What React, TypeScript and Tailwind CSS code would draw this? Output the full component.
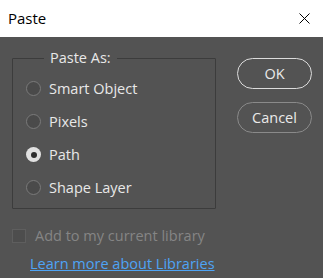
const font = { fontFamily: '"Open Sans", "Noto Sans", Arial, sans-serif' }

function Radio({ label, checked }: { label: string; checked?: boolean }) {
  return (
    <div className="flex h-[33px] items-center">
      {checked ? (
        <span className="flex h-[15px] w-[15px] items-center justify-center rounded-full bg-[#e1e1e1]">
          <span className="h-[6px] w-[6px] rounded-full bg-[#2e2e2e]" />
        </span>
      ) : (
        <span className="h-[15px] w-[15px] rounded-full border border-[#7a7a7a] bg-[#4a4a4a]" />
      )}
      <span className="ml-[8px] text-[14.5px] text-[#e8e8e8]">{label}</span>
    </div>
  )
}

export default function App() {
  return (
    <div className="h-[278px] w-[323px] overflow-hidden bg-[#535353]" style={font}>
      <div className="flex h-[37px] items-center justify-between bg-white pl-[8px] pr-[13px]">
        <span className="text-[15px] text-black">Paste</span>
        <svg width="11" height="11" viewBox="0 0 11 11">
          <path d="M0.5 0.5 L10.5 10.5 M10.5 0.5 L0.5 10.5" stroke="#000" strokeWidth="1" />
        </svg>
      </div>
      <div className="flex">
        <div className="ml-[12px] flex flex-col">
          <fieldset className="mt-[12px] h-[160px] w-[204px] rounded-[1px] border border-[#3c3c3c] pl-[13px] pt-[5px]">
            <legend className="ml-[18px] px-[6px] text-[14.5px] leading-[18px] text-[#e8e8e8]">Paste As:</legend>
            <Radio label="Smart Object" />
            <Radio label="Pixels" />
            <Radio label="Path" checked />
            <Radio label="Shape Layer" />
          </fieldset>
          <div className="mt-[16px] flex items-center">
            <span className="h-[14px] w-[14px] border border-[#5e5e5e] bg-[#4d4d4d]" />
            <span className="ml-[9px] text-[14.5px] text-[#858585]">Add to my current library</span>
          </div>
          <a className="ml-[18px] mt-[6px] text-[14.5px] text-[#4ea4f6] underline">Learn more about Libraries</a>
        </div>
        <div className="ml-[21px] mt-[21px] flex flex-col gap-[13px]">
          <button className="h-[31px] w-[75px] rounded-full border border-[#dcdcdc] text-[14.5px] text-[#eaeaea]">OK</button>
          <button className="h-[31px] w-[75px] rounded-full border border-[#8a8a8a] text-[14.5px] text-[#eaeaea]">Cancel</button>
        </div>
      </div>
    </div>
  )
}
